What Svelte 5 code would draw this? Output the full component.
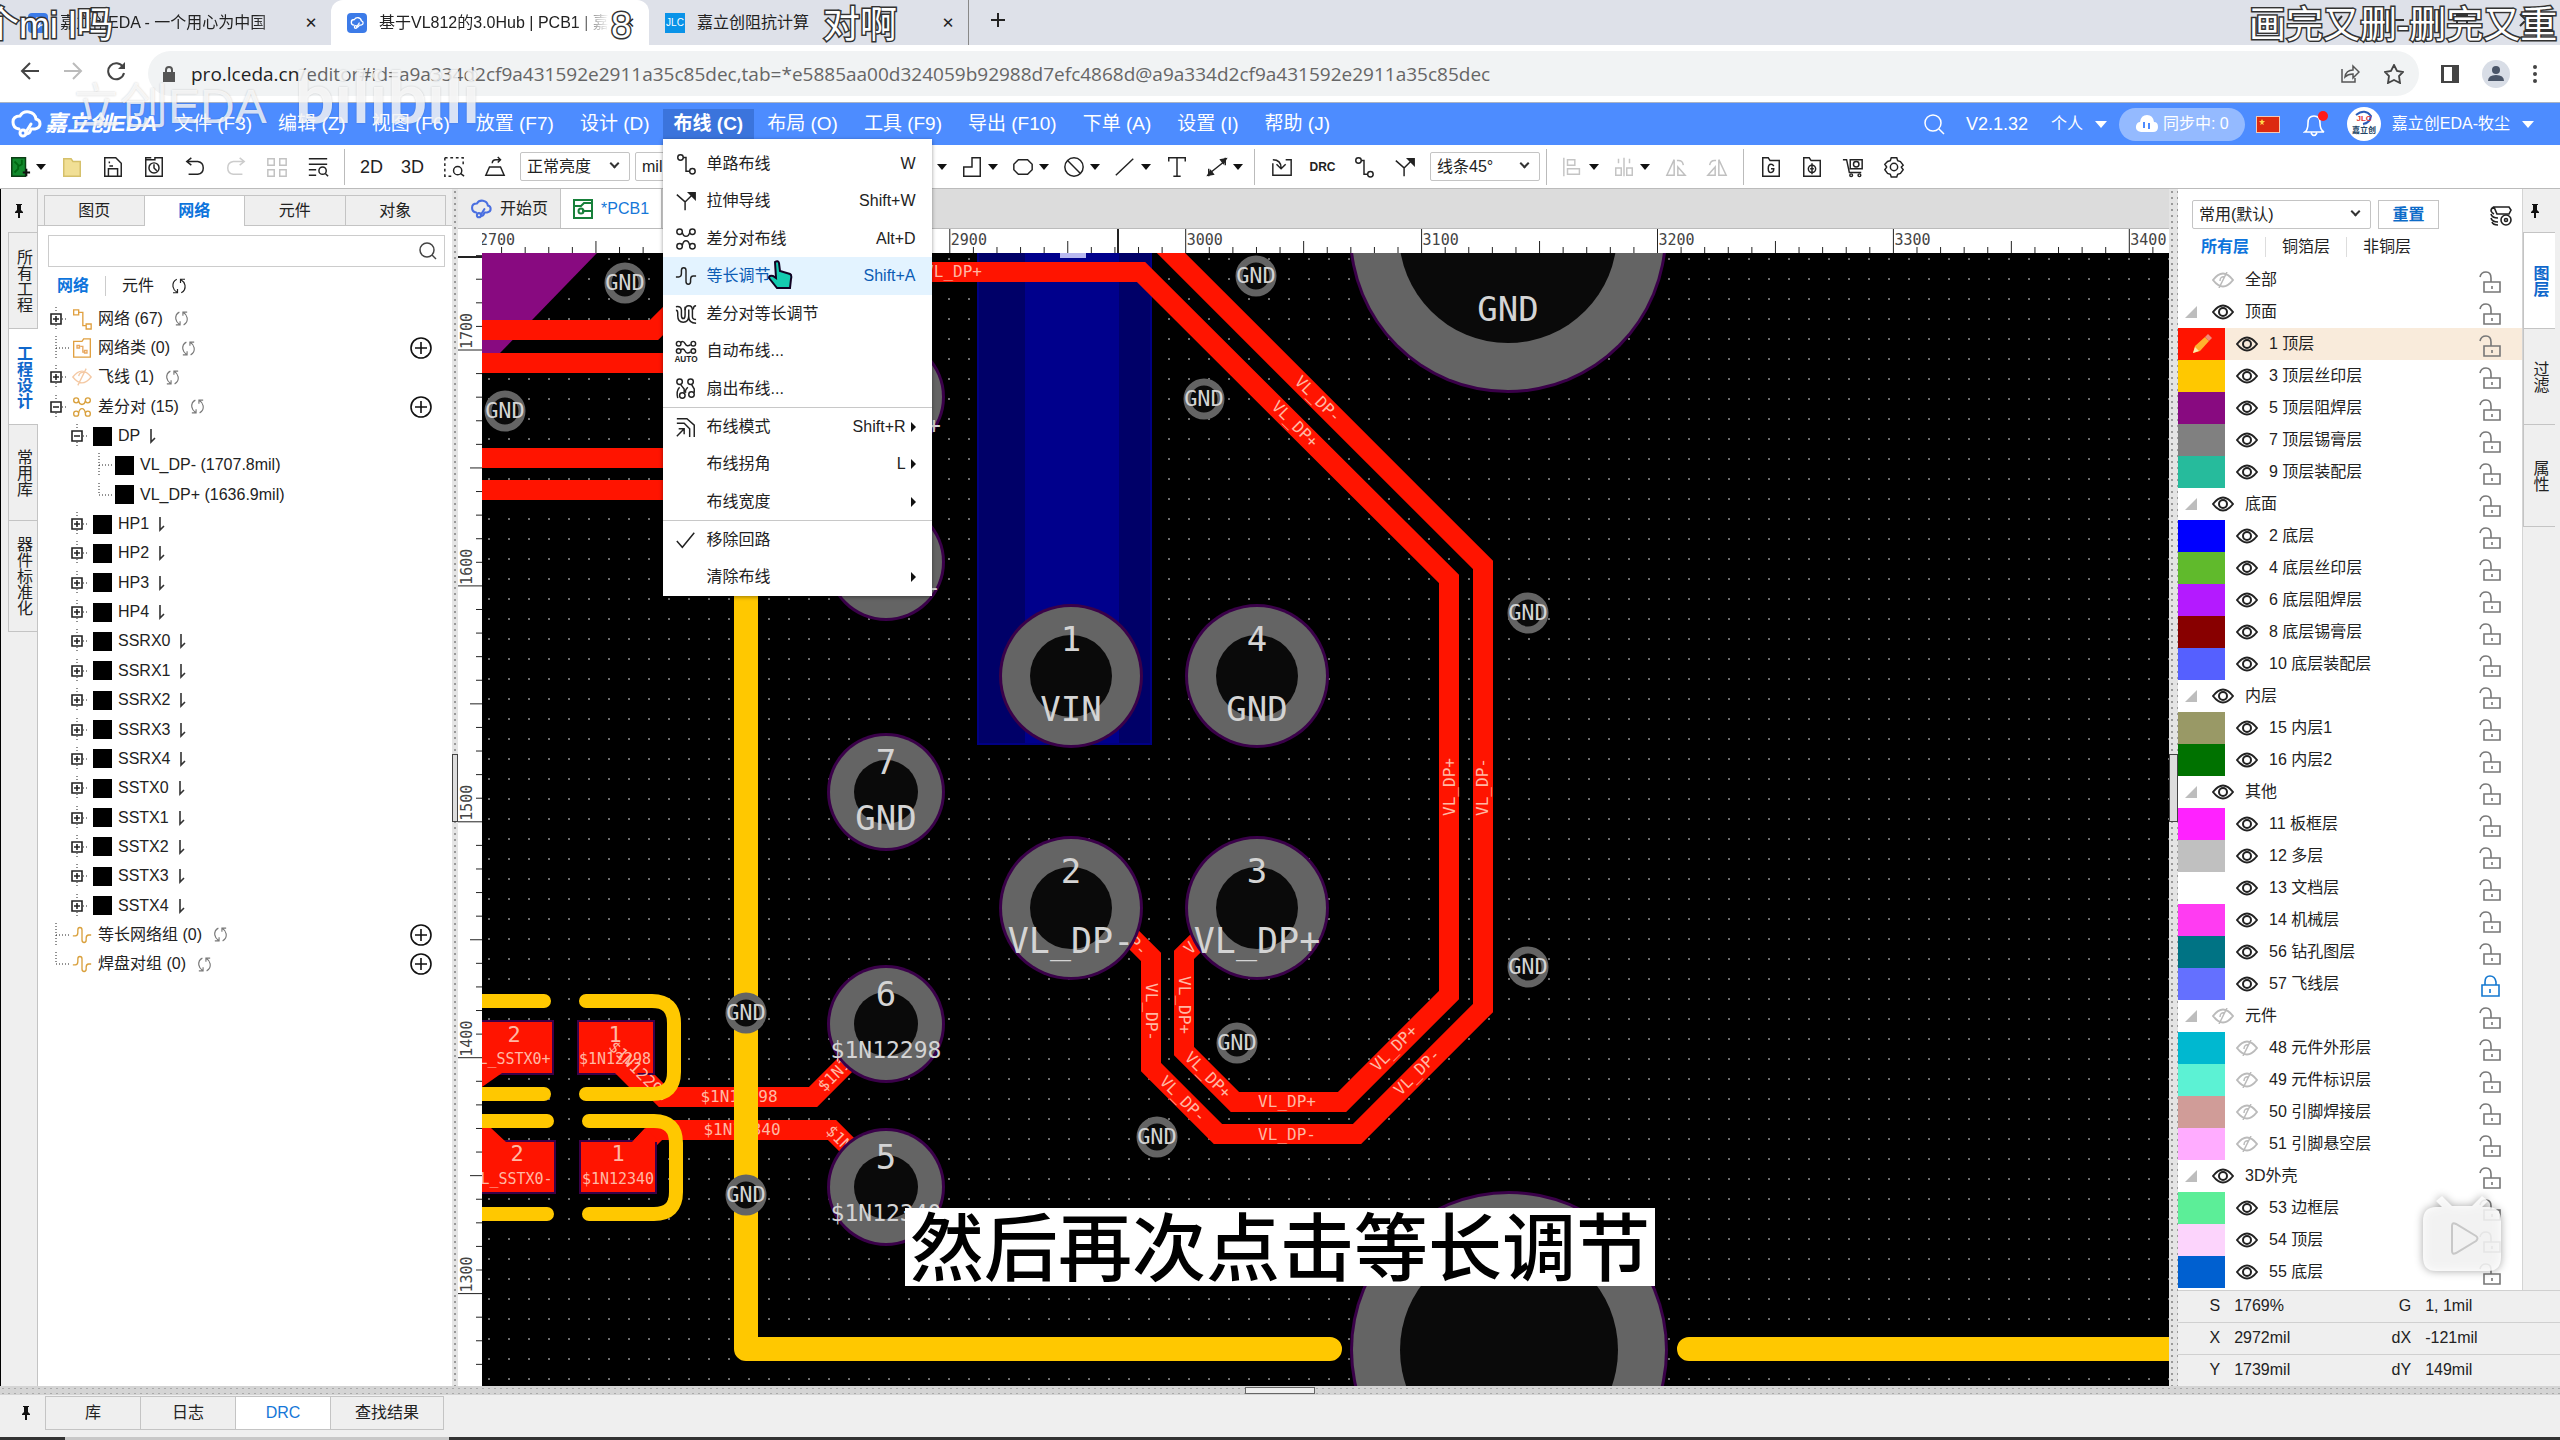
<script lang="ts">
  interface TreeNode {
    level: number;
    label: string;
    icon?: string;
    box?: '+' | '-';
    last?: boolean;
    add?: boolean;
    refresh?: boolean;
    sort?: boolean;
  }

  interface Layer {
    name: string;
    color?: string;
    hidden?: boolean;
    locked?: boolean;
    all?: boolean;
  }

  interface MenuItem {
    label: string;
    icon?: string;
    keys?: string;
    sub?: boolean;
    active?: boolean;
  }

  const icons: Record<string, string> = {
    pcb: '<path d="M3 2h15v20H3z" fill="#128a2d" stroke="#0b3d14"/><path d="M6 6l4 4v4l-4 4M14 4v5l-3 2" stroke="#061" stroke-width="2"/><path d="M15 18h8M19 14v8" stroke="#111" stroke-width="2"/>',
    folder: '<path d="M3 3h8l2 3h8v16H3z" fill="#f1df95" stroke="#d5c06a"/>',
    save: '<path d="M3 2h12l6 6v14H3zM7 22v-8h10v8M8 6v2M8 11h4"/>',
    saveAs: '<path d="M3 4h10V2h8v20H3V2h6"/><circle cx="12" cy="13" r="5.5"/><path d="M12 9v4l3 3"/>',
    undo: '<path d="M8 2L3 6l5 4M3 6h12q6 1 6 7t-6 7H5"/>',
    redo: '<path d="M16 2l5 4-5 4M21 6H9q-6 1-6 7t6 7h10" stroke="#ccc"/>',
    grid: '<path d="M2 3h7v7H2zM15 3h7v7h-7zM2 15h7v7H2zM15 15h7v7h-7z" stroke="#c2c2c2"/>',
    find: '<path d="M2 3h20M2 9h20M2 15h8M2 21h8"/><circle cx="17" cy="16" r="4"/><path d="M20 19l3 3"/>',
    zoomBox: '<path d="M2 2h20v7M2 2v20h8" stroke-dasharray="3 3"/><circle cx="16" cy="16" r="4.5"/><path d="M19 19l4 3"/>',
    trapezoid: '<path d="M6 12h12l4 9H2zM9 8q0-4 4-4h4M15 1l3 3-3 3"/>',
    route: '<circle cx="6" cy="5" r="3"/><circle cx="19" cy="20" r="3"/><path d="M9 5h3v15h4"/>',
    stretch: '<path d="M2 5l9 8v9M11 13l9-9"/><path d="M15 3h7v7z" fill="#222"/>',
    pair: '<circle cx="5" cy="4" r="3"/><circle cx="19" cy="4" r="3"/><circle cx="5" cy="20" r="3"/><circle cx="19" cy="20" r="3"/><path d="M8 5q1 4 4 4t4-4M8 19q1-5 4-5t4 5"/>',
    wave: '<path d="M1 13h3q3 0 3-4V6q0-3 2.500-3T12 6v12q0 3 2.500 3t2.500-3v-2q0-4 3-4h3"/>',
    pairWave: '<path d="M1 4q6-1 6 4v5q0 4 2 4t2-4V8q0-5 4-5t4 5v7q0 3 4 3"/><path d="M1 8q2 0 2 3v3q0 7 6 7t6-7V9q0-2 0-2v8q0 7 8 7M11 8V4M23 3q-3 0-3 4"/>',
    auto: '<circle cx="4" cy="4" r="2.500"/><circle cx="20" cy="4" r="2.500"/><circle cx="4" cy="12" r="2.500"/><circle cx="20" cy="12" r="2.500"/><path d="M6 3q3-3 5 1t6 1M6 11q3-3 5 1t6 1"/><text x="12" y="24" font-size="9" font-weight="700" text-anchor="middle" fill="#222" stroke="none" font-family="Liberation Sans, sans-serif">AUTO</text>',
    fan: '<circle cx="5" cy="4" r="3"/><circle cx="17" cy="4" r="3"/><path d="M6 7l4 5v4M18 7l3 5v4M5 10q-4 4-2 12M14 10q-4 4-2 6"/><circle cx="8" cy="19" r="3"/><circle cx="18" cy="18" r="3"/>',
    mode: '<path d="M2 3h11l8 7v13M2 8h8l6 6v9M2 22l8-8M4 14h6v6"/>',
    check: '<path d="M2 13l6 7L21 4"/>',
    polygon: '<path d="M3 12h9V2h9v20H3z"/>',
    roundRect: '<path d="M7 4h10l5 5v6l-5 5H7l-5-5V9z"/>',
    ban: '<circle cx="12" cy="12" r="10"/><path d="M5 5l14 14"/>',
    line: '<path d="M2 21L21 3"/>',
    text: '<path d="M3 6V2h18v4M12 2v20M8 22h8"/>',
    dimension: '<path d="M5 18L20 6M3 14v8M21 2v8" /><path d="M2 21l6-1-3-4zM22 3l-6 1 3 4z" fill="#222"/>',
    via: '<circle cx="12" cy="12" r="9" stroke-dasharray="3 2"/><circle cx="12" cy="12" r="4"/>',
    importIn: '<path d="M2 8V21H22V4h-6M2 4q9 0 9 9M6 9l5 5 5-5"/>',
    align: '<path d="M2 2v20M6 4h8v6H6zM6 14h13v6H6z" stroke="#c4c4c4"/>',
    spread: '<path d="M3 13h6v8H3zM15 13h6v8h-6zM6 8V3M12 2v20M18 8V3" stroke="#c4c4c4"/>',
    flipH: '<path d="M10 4v17H2zM14 21h8l-8-9zM13 5q6-1 7 5" stroke="#c0c0c0"/>',
    flipV: '<path d="M14 4v17h8zM10 21H2l8-9zM11 5q-6-1-7 5" stroke="#c0c0c0"/>',
    gerber: '<path d="M3 2h6l2 3h10v17H3z"/><path d="M15 11q-1-2-3-2-3 0-3 4.500t3 4.500q3 0 3-4h-3"/>',
    pickPlace: '<path d="M3 2h6l2 3h10v17H3z"/><circle cx="12" cy="14" r="4"/><path d="M12 8v12M10 14h4"/>',
    cart: '<path d="M1 4h4l3 14h13M9 4h13v10H9z"/><circle cx="15.500" cy="9" r="3"/><circle cx="10" cy="21" r="1.500"/><circle cx="19" cy="21" r="1.500"/>',
    gear: '<path d="M9 2h6l1 3 3 1 3 4-2 2 2 3-3 4-3 1-1 3H9l-1-3-3-1-3-4 2-3-2-3 3-3 3-1z"/><circle cx="12" cy="12" r="4"/>',
    netTree: '<path d="M2 1h6v6H2zM17 18h6v6h-6zM8 4h5v16h4" stroke="#e0a040"/>',
    netClass: '<path d="M2 4h10l2-3h8v22H2z" stroke="#e0a040"/><path d="M6 9h3v3H6zM15 15h3v3h-3zM10 10h3v7h2" stroke="#e8a860"/>',
    ratline: '<path d="M1 12q11-14 22 0-11 14-22 0zM17 2L7 22M15 7q-6-2-7 4" stroke="#f4c9a4"/>',
    pairTree: '<circle cx="5" cy="4" r="3"/><circle cx="19" cy="4" r="3"/><circle cx="5" cy="20" r="3"/><circle cx="19" cy="20" r="3"/><path d="M8 5q1 4 4 4t4-4M8 19q1-5 4-5t4 5" />',
    refresh: '<path d="M9 3Q3 6 4 13q1 5 5 7M4 21h6v-5M15 21q6-3 5-10-1-5-5-7M20 3h-6v5"/>',
    layersCog: '<path d="M5 4h15l2 3-2 4H8zM5 4q-3 1-3 4 1 2 3 3M2 11q1 4 7 4M2 15q1 4 7 4M3 19q1 3 6 3"/><circle cx="17" cy="17" r="5"/><circle cx="17" cy="17" r="1.500"/>'
  };

  const fileMenus = ['文件 (F3)', '编辑 (Z)', '视图 (F6)', '放置 (F7)', '设计 (D)', '布线 (C)', '布局 (O)', '工具 (F9)', '导出 (F10)', '下单 (A)', '设置 (I)', '帮助 (J)'];

  const routeMenu: MenuItem[][] = [
    [
      { label: '单路布线', icon: 'route', keys: 'W' },
      { label: '拉伸导线', icon: 'stretch', keys: 'Shift+W' },
      { label: '差分对布线', icon: 'pair', keys: 'Alt+D' },
      { label: '等长调节', icon: 'wave', keys: 'Shift+A', active: true },
      { label: '差分对等长调节', icon: 'pairWave' },
      { label: '自动布线...', icon: 'auto' },
      { label: '扇出布线...', icon: 'fan' }
    ],
    [
      { label: '布线模式', icon: 'mode', keys: 'Shift+R', sub: true },
      { label: '布线拐角', keys: 'L', sub: true },
      { label: '布线宽度', sub: true }
    ],
    [
      { label: '移除回路', icon: 'check' },
      { label: '清除布线', sub: true }
    ]
  ];

  const pairs = ['HP1', 'HP2', 'HP3', 'HP4', 'SSRX0', 'SSRX1', 'SSRX2', 'SSRX3', 'SSRX4', 'SSTX0', 'SSTX1', 'SSTX2', 'SSTX3', 'SSTX4'];

  const tree: TreeNode[] = [
    { level: 1, label: '网络 (67)', icon: 'netTree', box: '+', refresh: true },
    { level: 1, label: '网络类 (0)', icon: 'netClass', refresh: true, add: true },
    { level: 1, label: '飞线 (1)', icon: 'ratline', box: '+', refresh: true },
    { level: 1, label: '差分对 (15)', icon: 'pairTree', box: '-', refresh: true, add: true },
    { level: 2, label: 'DP', box: '-', sort: true },
    { level: 3, label: 'VL_DP- (1707.8mil)' },
    { level: 3, label: 'VL_DP+ (1636.9mil)', last: true },
    ...pairs.map((label) => ({ level: 2, label, box: '+' as const, sort: true })),
    { level: 1, label: '等长网络组 (0)', icon: 'wave', refresh: true, add: true },
    { level: 1, label: '焊盘对组 (0)', icon: 'wave', refresh: true, add: true, last: true }
  ];

  const layers: Layer[] = [
    { name: '全部', hidden: true, all: true },
    { name: '顶面' },
    { name: '1 顶层', color: '#ff1400' },
    { name: '3 顶层丝印层', color: '#ffc800' },
    { name: '5 顶层阻焊层', color: '#880a80' },
    { name: '7 顶层锡膏层', color: '#808080' },
    { name: '9 顶层装配层', color: '#26bb9c' },
    { name: '底面' },
    { name: '2 底层', color: '#0000ff' },
    { name: '4 底层丝印层', color: '#60ba2c' },
    { name: '6 底层阻焊层', color: '#b41aff' },
    { name: '8 底层锡膏层', color: '#880000' },
    { name: '10 底层装配层', color: '#5560ff' },
    { name: '内层' },
    { name: '15 内层1', color: '#999966' },
    { name: '16 内层2', color: '#007200' },
    { name: '其他' },
    { name: '11 板框层', color: '#ff22ff' },
    { name: '12 多层', color: '#c0c0c0' },
    { name: '13 文档层', color: '#ffffff' },
    { name: '14 机械层', color: '#ff3cf2' },
    { name: '56 钻孔图层', color: '#007384' },
    { name: '57 飞线层', color: '#6470ff', locked: true },
    { name: '元件', hidden: true },
    { name: '48 元件外形层', color: '#00b8d0', hidden: true },
    { name: '49 元件标识层', color: '#5cf2d4', hidden: true },
    { name: '50 引脚焊接层', color: '#d09c98', hidden: true },
    { name: '51 引脚悬空层', color: '#ffacff', hidden: true },
    { name: '3D外壳' },
    { name: '53 边框层', color: '#5cee98' },
    { name: '54 顶层', color: '#fcd4fc' },
    { name: '55 底层', color: '#0060d0' }
  ];

  const vias = [[625, 283], [505, 411], [1256, 276], [1204, 399], [1528, 613], [1528, 967], [1237, 1043], [1157, 1137], [746, 1013], [746, 1195]];

  const pads = [
    { x: 1071, y: 676, r: 69, hole: 41, num: '1', net: 'VIN', size: 34 },
    { x: 1257, y: 676, r: 69, hole: 41, num: '4', net: 'GND', size: 34 },
    { x: 1071, y: 908, r: 69, hole: 41, num: '2', net: 'VL_DP-', size: 35 },
    { x: 1257, y: 908, r: 69, hole: 41, num: '3', net: 'VL_DP+', size: 35 },
    { x: 886, y: 397, r: 56, hole: 32, num: '', net: '', size: 34 },
    { x: 886, y: 562, r: 56, hole: 32, num: '', net: '', size: 34 },
    { x: 886, y: 792, r: 56, hole: 32, num: '7', net: 'GND', size: 34 },
    { x: 886, y: 1024, r: 56, hole: 32, num: '6', net: '$1N12298', size: 23 },
    { x: 886, y: 1187, r: 56, hole: 32, num: '5', net: '$1N12340', size: 23 }
  ];

  const traceLabels = [
    { x: 953, y: 271, a: 0, t: 'VL_DP+' },
    { x: 1295, y: 424, a: 45, t: 'VL_DP+' },
    { x: 1318, y: 399, a: 45, t: 'VL_DP-' },
    { x: 1449, y: 787, a: -90, t: 'VL_DP+' },
    { x: 1482, y: 787, a: -90, t: 'VL_DP-' },
    { x: 1394, y: 1048, a: -45, t: 'VL_DP+' },
    { x: 1417, y: 1072, a: -45, t: 'VL_DP-' },
    { x: 1287, y: 1101, a: 0, t: 'VL_DP+' },
    { x: 1287, y: 1134, a: 0, t: 'VL_DP-' },
    { x: 1208, y: 1075, a: 45, t: 'VL_DP+' },
    { x: 1183, y: 1099, a: 45, t: 'VL_DP-' },
    { x: 1151, y: 1012, a: 90, t: 'VL_DP-' },
    { x: 1184, y: 1005, a: 90, t: 'VL_DP+' },
    { x: 1138, y: 946, a: 45, t: 'P-' },
    { x: 1190, y: 948, a: -45, t: 'V' },
    { x: 739, y: 1096, a: 0, t: '$1N12298' },
    { x: 742, y: 1129, a: 0, t: '$1N12340' },
    { x: 639, y: 1071, a: 45, t: '$1N12298' },
    { x: 834, y: 1075, a: -45, t: '$1N1' },
    { x: 839, y: 1138, a: 45, t: '$1N' }
  ];

  // one ruler division is 10mil
  const step = 23.59;
  const origin = { x: 482, y: 253 };
  const xTicks = Array.from({ length: 73 }, (_, i) => ({ pos: 478 + i * step - origin.x, mil: 2700 + i * 10 }));
  const yTicks = Array.from({ length: 49 }, (_, i) => ({ pos: 350 + (i - 4) * step - origin.y, mil: 1740 - i * 10 }));

  function tick(mil: number) {
    if (mil % 100 === 0) return 24;
    return mil % 50 === 0 ? 12 : 6;
  }

  let search = $state('');
  let openMenu = $state('布线 (C)');
  let sideTab = $state('网络');
  let bottomTab = $state('DRC');
  let activeLayer = $state('1 顶层');
</script>

{#snippet icon(name: string, size = 22)}
  <svg class="icon" width={size} height={size} viewBox="0 0 24 24" fill="none" stroke="currentColor" stroke-width="1.600">{@html icons[name]}</svg>
{/snippet}

{#snippet tool(name: string)}
  <button class="tool" aria-label={name}>{@render icon(name)}</button>
{/snippet}

{#snippet combo(name: string)}
  <button class="combo" aria-label={name}>{@render icon(name)}<span class="caret"></span></button>
{/snippet}

{#snippet pin()}
  <svg class="pin" width="10" height="14" viewBox="0 0 10 14"><path d="M2 0h6v1H7v5l2 2v1H6v5H4V9H1V8l2-2V1H2z" fill="#111" /></svg>
{/snippet}

{#snippet cloud(size: number)}
  <svg width={size} height={size} viewBox="0 0 32 30" fill="none" stroke="currentColor" stroke-width="3" stroke-linecap="round">
    <path d="M9 20q-6-1-6-7t7-6q3-5 9-4t7 7q4 1 4 5t-5 5h-4q-1 5-5 5" /><circle cx="13" cy="24" r="3" /><path d="M16 23l5-8" />
  </svg>
{/snippet}

{#snippet eye(off: boolean | undefined)}
  <svg width="22" height="16" viewBox="0 0 22 16" fill="none" stroke={off ? '#bbb' : '#222'} stroke-width="2">
    <path d="M1 8q10-13 20 0-10 13-20 0z" />
    {#if off}
      <path d="M15 0L7 16M13 5q-5-1-5 4" stroke-width="1.500" />
    {:else}
      <circle cx="11" cy="8" r="4" />
    {/if}
  </svg>
{/snippet}

<div class="window">
  <header class="tabstrip">
    <div class="tab first">
      <span class="favicon">{@render cloud(14)}</span>
      <span class="tab-title fade">嘉立创EDA - 一个用心为中国</span>
      <button class="close" aria-label="close">✕</button>
    </div>
    <div class="tab current">
      <span class="favicon">{@render cloud(14)}</span>
      <span class="tab-title fade">基于VL812的3.0Hub | PCB1 | 嘉</span>
      <button class="close" aria-label="close">✕</button>
    </div>
    <div class="tab third">
      <span class="favicon jlc">JLC</span>
      <span class="tab-title">嘉立创阻抗计算</span>
      <button class="close" aria-label="close">✕</button>
    </div>
    <button class="new-tab" aria-label="new tab"><svg width="16" height="16" viewBox="0 0 16 16"><path d="M8 1v14M1 8h14" stroke="#222" stroke-width="2" /></svg></button>
    <div class="window-buttons">
      <svg width="210" height="16" viewBox="0 0 210 16" fill="none" stroke="#333" stroke-width="2"><path d="M4 4l6 7 6-7M66 8h12M131 3h10v10h-10zM194 2l12 12M206 2l-12 12" /></svg>
    </div>
  </header>

  <div class="addressbar">
    <button aria-label="back"><svg width="22" height="20" viewBox="0 0 22 20" fill="none" stroke="#444" stroke-width="2"><path d="M20 10H3M11 2l-8 8 8 8" /></svg></button>
    <button aria-label="forward"><svg width="22" height="20" viewBox="0 0 22 20" fill="none" stroke="#bbb" stroke-width="2"><path d="M2 10h17M11 2l8 8-8 8" /></svg></button>
    <button aria-label="reload"><svg width="22" height="20" viewBox="0 0 22 20" fill="none" stroke="#444" stroke-width="2"><path d="M18 6a8 8 0 1 0 1 6" /><path d="M20 1v7h-7z" fill="#444" stroke="none" /></svg></button>
    <div class="url">
      <svg width="12" height="16" viewBox="0 0 12 16"><path d="M0 6h12v10H0z" fill="#555" /><path d="M3 6V4q0-3 3-3t3 3v2" fill="none" stroke="#555" stroke-width="2" /></svg>
      <a href="#editor"><b>pro.lceda.cn</b>/editor#id=a9a334d2cf9a431592e2911a35c85dec,tab=*e5885aa00d324059b92988d7efc4868d@a9a334d2cf9a431592e2911a35c85dec</a>
      <span class="grow"></span>
      <svg width="20" height="20" viewBox="0 0 20 20" fill="none" stroke="#555" stroke-width="1.500"><path d="M2 5v13h13v-4M5 13q1-7 8-7V2l6 6-6 6v-4q-5 0-8 3z" /></svg>
      <svg width="20" height="20" viewBox="0 0 20 20" fill="none" stroke="#444" stroke-width="1.800"><path d="M10 1l3 6 6 1-4 4 1 7-6-3-6 3 1-7-4-4 6-1z" /></svg>
    </div>
    <svg width="20" height="20" viewBox="0 0 20 20"><path d="M1 1h18v18H1z" fill="#444" /><path d="M4 3h8v14H4z" fill="#fff" /></svg>
    <svg width="30" height="30" viewBox="0 0 30 30"><circle cx="15" cy="15" r="14" fill="#d8dde6" /><circle cx="15" cy="11" r="4" fill="#4a5568" /><path d="M7 22q0-6 8-6t8 6z" fill="#4a5568" /></svg>
    <svg width="6" height="20" viewBox="0 0 6 20" fill="#444"><circle cx="3" cy="3" r="2" /><circle cx="3" cy="10" r="2" /><circle cx="3" cy="17" r="2" /></svg>
  </div>

  <nav class="menubar">
    <span class="brand">{@render cloud(32)}<i>嘉立创EDA</i></span>
    {#each fileMenus as name}
      <div class="menu-slot">
        <button class="menu" class:open={openMenu === name} onclick={() => (openMenu = openMenu === name ? '' : name)}>{name}</button>
        {#if name === '布线 (C)' && openMenu === name}
          <div class="dropdown">
            {#each routeMenu as group}
              <div class="group">
                {#each group as item}
                  <button class="item" class:active={item.active}>
                    <span class="item-icon">{#if item.icon}{@render icon(item.icon, 22)}{/if}</span>
                    <span>{item.label}</span>
                    <span class="keys">{item.keys ?? ''}</span>
                    {#if item.sub}<span class="arrow"></span>{/if}
                  </button>
                {/each}
              </div>
            {/each}
            <svg class="pointer" width="26" height="30" viewBox="0 0 26 30"><path d="M8 2q3-2 4 1l1 8 10 3q2 1 1 5l-1 9H10L2 18q0-3 4-2l3 2z" fill="#14cbb0" stroke="#102" stroke-width="2" /></svg>
          </div>
        {/if}
      </div>
    {/each}
    <span class="grow"></span>
    <div class="account">
      <svg width="22" height="22" viewBox="0 0 22 22" fill="none" stroke="#fff" stroke-width="1.500"><circle cx="10" cy="10" r="8" /><path d="M16 16l5 5" /></svg>
      <span class="version">V2.1.32</span>
      <button class="personal">个人<span class="caret light"></span></button>
      <button class="sync"><svg width="24" height="20" viewBox="0 0 24 20"><path d="M6 18q-6-1-5-6 1-4 4-4 1-7 7-7t7 7q4 0 4 5t-5 5z" fill="#fff" /><path d="M9 8v6M14 9v6" stroke="#4d8cff" stroke-width="2" /></svg>同步中: 0</button>
      <svg class="flag" width="24" height="17" viewBox="0 0 24 17"><path d="M0 0h24v17H0z" fill="#f3c9b5" /><path d="M1 1h22v15H1z" fill="#dc2a10" /><path d="M6 3l1 2h2L7 7l1 2-2-1-2 1 1-2-2-2h2z" fill="#ffd84a" /></svg>
      <svg class="bell" width="28" height="28" viewBox="0 0 28 28" fill="none" stroke="#fff" stroke-width="1.600"><path d="M2 22q3-2 3-9 0-7 6-7t6 7q0 7 4 9zM8 23q3 5 6 0" /><circle cx="20" cy="6" r="5" fill="#ff1a1a" stroke="none" /></svg>
      <svg class="avatar" width="34" height="34" viewBox="0 0 34 34"><circle cx="17" cy="17" r="17" fill="#fff" /><path d="M9 8q9-7 15 1-1 7-8 8" fill="none" stroke="#2a5cb8" stroke-width="2" /><text x="17" y="14" font-size="8" font-weight="700" text-anchor="middle" fill="#d33">JLC</text><text x="17" y="26" font-size="8" font-weight="700" text-anchor="middle" fill="#246">嘉立创</text></svg>
      <button class="user">嘉立创EDA-牧尘<span class="caret light"></span></button>
    </div>
  </nav>

  <div class="toolbar">
    {@render combo('pcb')}
    {#each ['folder', 'save', 'saveAs', 'undo', 'redo', 'grid', 'find'] as name}{@render tool(name)}{/each}
    <span class="sep"></span>
    <button class="tool">2D</button>
    <button class="tool">3D</button>
    {@render tool('zoomBox')}
    {@render tool('trapezoid')}
    <label class="select"><select aria-label="亮度"><option>正常亮度</option></select></label>
    <label class="select"><select aria-label="单位"><option>mil</option></select></label>
    <span class="sep"></span>
    {@render tool('route')}
    {#each ['line', 'text', 'via', 'polygon', 'roundRect', 'ban', 'line'] as name}{@render combo(name)}{/each}
    {@render tool('text')}
    {@render combo('dimension')}
    <span class="sep"></span>
    {@render tool('importIn')}
    <button class="tool drc">DRC</button>
    {@render tool('route')}
    {@render tool('stretch')}
    <label class="select"><select aria-label="拐角"><option>线条45°</option></select></label>
    <span class="sep"></span>
    {@render combo('align')}
    {@render combo('spread')}
    {@render tool('flipH')}
    {@render tool('flipV')}
    <span class="sep"></span>
    {#each ['gerber', 'pickPlace', 'cart', 'gear'] as name}{@render tool(name)}{/each}
  </div>

  <main>
    <aside class="rail">
      <div class="rail-pin">{@render pin()}</div>
      {#each ['所有工程', '工程设计', '常用库', '器件标准化'] as name}
        <button class="rail-tab" class:on={name === '工程设计'}>{name}</button>
      {/each}
    </aside>

    <section class="project">
      <div class="project-tabs">
        {#each ['图页', '网络', '元件', '对象'] as name}
          <button class:on={sideTab === name} onclick={() => (sideTab = name)}>{name}</button>
        {/each}
      </div>
      <label class="search">
        <input type="text" aria-label="搜索" bind:value={search} />
        <svg width="18" height="18" viewBox="0 0 18 18" fill="none" stroke="#444" stroke-width="1.500"><circle cx="8" cy="8" r="7" /><path d="M13 13l4 4" /></svg>
      </label>
      <div class="subtabs">
        <button class="on">网络</button>
        <button>元件</button>
        {@render icon('refresh', 18)}
      </div>
      <ul class="tree">
        {#each tree as node}
          <li class="level-{node.level}">
            <svg class="joint" width="20" height="24" viewBox="0 0 20 24" fill="none" stroke="#222">
              {#if node.box}
                <path d="M7 0v6M7 18v6M13 12h6" stroke-dasharray="1 2" />
                <path d="M2 7h10v10H2zM4 12h6" stroke-width="1.600" />
                {#if node.box === '+'}<path d="M7 9v6" stroke-width="1.600" />{/if}
              {:else}
                <path d={node.last ? 'M7 0v12h13' : 'M7 0v24M7 12h13'} stroke-dasharray="1 2" />
              {/if}
            </svg>
            {#if node.icon}
              <span class="tree-icon" class:gold={node.icon === 'wave' || node.icon === 'pairTree'}>{@render icon(node.icon, 20)}</span>
            {:else}
              <span class="net-color"></span>
            {/if}
            <span>{node.label}</span>
            {#if node.refresh}<span class="reload">{@render icon('refresh', 17)}</span>{/if}
            {#if node.sort}<svg class="sort" width="8" height="16" viewBox="0 0 8 16" fill="none" stroke="#333" stroke-width="1.600"><path d="M2 1v13l4-4" /></svg>{/if}
            {#if node.add}
              <button class="add" aria-label="add {node.label}"><svg width="22" height="22" viewBox="0 0 22 22" fill="none" stroke="#111" stroke-width="1.600"><circle cx="11" cy="11" r="10" /><path d="M11 5v12M5 11h12" /></svg></button>
            {/if}
          </li>
        {/each}
      </ul>
    </section>

    <div class="splitter"><span class="handle"></span></div>

    <section class="editor">
      <div class="doc-tabs">
        <button class="doc">{@render cloud(22)}开始页</button>
        <button class="doc on">
          <svg width="20" height="20" viewBox="0 0 20 20" fill="none" stroke="#17803a" stroke-width="2"><path d="M1 1h18v18H1zM1 7h7l3-3h8M9 12h10" /><circle cx="8" cy="12" r="2.500" /></svg>*PCB1
        </button>
      </div>
      <div class="sheet">
        <div class="corner"></div>
        <svg class="ruler" width="100%" height="24">
          {#each xTicks as t}
            <path d="M{t.pos} 24v-{tick(t.mil)}" />
            {#if t.mil % 100 === 0}<text x={t.pos + 1} y="16">{t.mil}</text>{/if}
          {/each}
          <path d="M636 0v24" stroke-width="2" />
        </svg>
        <svg class="ruler" width="24" height="100%">
          {#each yTicks as t}
            <path d="M24 {t.pos}h-{tick(t.mil)}" />
            {#if t.mil % 100 === 0}<text transform="translate(14 {t.pos - 1}) rotate(-90)">{t.mil}</text>{/if}
          {/each}
          <path d="M0 4h24" stroke-width="2" />
        </svg>
        <svg class="board" width="100%" height="100%">
          <defs>
            <pattern id="dots" width="20" height="20" x="488" y="258" patternUnits="userSpaceOnUse"><path d="M0 0h2v2H0z" fill="#6e6e6e" /></pattern>
          </defs>
          <g transform="translate(-482 -253)">
            <rect x="482" y="253" width="4000" height="3000" fill="url(#dots)" />
            <path d="M482 253H597L499 354H482z" fill="#880a80" />
            <rect x="977" y="253" width="175" height="492" fill="#000068" />
            <rect x="1025" y="253" width="94" height="492" fill="#00008c" />
            <path d="M977 744h174v-40M978 744V253M1151 705V253" fill="none" stroke="#000084" stroke-width="2" />
            <rect x="1060" y="253" width="26" height="5" fill="#b8b8f0" />
            <g class="trace">
              <path d="M470 330H654L690 294M470 363H700M470 458H700M470 490H700" />
              <path d="M700 272H1141L1449 579V995L1342 1102H1235L1184 1051V955L1231 908" />
              <path d="M1151 233L1483 565V1008L1357 1134H1218L1151 1067V957L1102 908" />
              <path d="M615 1049L663 1097H813L886 1024" />
              <path d="M625 1163L658 1130H832L886 1184" />
            </g>
            <g class="smd">
              <path d="M470 1022h82v51h-82zM579 1022h74v51h-74zM470 1142h84v50h-84zM581 1142h74v50h-74z" />
            </g>
            <path d="M482 1073H502L482 1087zM482 1128H491L506 1142H482zM615 1073H637L650 1086 640 1098zM632 1142L645 1128 660 1142z" fill="#ff1400" />
            <g class="net small">
              {#each traceLabels as l}
                <text transform="translate({l.x} {l.y}) rotate({l.a})">{l.t}</text>
              {/each}
            </g>
            <g class="net part">
              <text x="514" y="1034" class="big">2</text><text x="615" y="1034" class="big">1</text>
              <text x="517" y="1153" class="big">2</text><text x="618" y="1153" class="big">1</text>
              <text x="510" y="1059">VL_SSTX0+</text><text x="615" y="1059">$1N12298</text>
              <text x="512" y="1179">VL_SSTX0-</text><text x="618" y="1179">$1N12340</text>
            </g>
            <g class="silk">
              <path d="M470 1001H544M470 1094H544M586 1001H652Q674 1001 674 1023V1072Q674 1094 652 1094H586" />
              <path d="M470 1121H547M470 1214H547M589 1121H654Q676 1121 676 1143V1192Q676 1214 654 1214H589" />
            </g>
            <path d="M746 500V1349H1330M1689 1349H4000" fill="none" stroke="#ffc800" stroke-width="24" stroke-linecap="round" stroke-linejoin="round" />
            {#each [[1508, 234], [1509, 1350]] as [x, y]}
              <circle cx={x} cy={y} r="159" fill="#3a0049" />
              <circle cx={x} cy={y} r="156" fill="#646464" />
              <circle cx={x} cy={y} r="109" fill="#0a0a0a" />
              <text class="net white" {x} y={y + 75} font-size="34">GND</text>
            {/each}
            {#each pads as p}
              <circle cx={p.x} cy={p.y} r={p.r + 3} fill="#3a0049" />
              <circle cx={p.x} cy={p.y} r={p.r} fill="#646464" />
              <circle cx={p.x} cy={p.y} r={p.hole} fill="#0a0a0a" />
            {/each}
            {#each pads as p}
              <text class="net white" x={p.x} y={p.y - (p.r > 60 ? 37 : 30)} font-size="34">{p.num}</text>
              <text class="net white" x={p.x} y={p.y + (p.r > 60 ? 33 : 26)} font-size={p.size}>{p.net}</text>
            {/each}
            <text class="net white" x="934" y="425" font-size="23">+</text>
            <text class="net white" x="934" y="587" font-size="23">-</text>
            {#each vias as [x, y]}
              <circle cx={x} cy={y} r="17" fill="#0a0a0a" stroke="#646464" stroke-width="7" />
              <text class="net white" {x} y={y - 1} font-size="22">GND</text>
            {/each}
          </g>
        </svg>
      </div>
    </section>

    <div class="splitter right"><span class="handle"></span></div>

    <section class="layers">
      <div class="layer-head">
        <label class="select wide"><select aria-label="图层配置"><option>常用(默认)</option></select></label>
        <button class="reset">重置</button>
        <span class="grow"></span>
        {@render icon('layersCog', 24)}
      </div>
      <div class="layer-tabs">
        <button class="on">所有层</button>
        <button>铜箔层</button>
        <button>非铜层</button>
      </div>
      <ul class="layer-list">
        {#each layers as layer}
          <li class:group-row={!layer.color} class:selected={layer.name === activeLayer}>
            {#if layer.color}
              <button class="swatch" style="background: {layer.color}" aria-label={layer.name} onclick={() => (activeLayer = layer.name)}>
                {#if layer.name === activeLayer}
                  <svg width="22" height="22" viewBox="0 0 22 22"><path d="M2 20l2-7L14 4l4 4-9 10z" fill="#ffb22e" /><path d="M14 4l3-3 4 4-3 3z" fill="#f08a7a" /><path d="M2 20l2-6 4 4z" fill="#ffe9b0" /></svg>
                {/if}
              </button>
            {:else}
              <svg class="fold" width="12" height="12" viewBox="0 0 12 12">{#if !layer.all}<path d="M12 0v12H0z" fill="#bdbdbd" />{/if}</svg>
            {/if}
            <button class="eye" aria-label="toggle {layer.name}">{@render eye(layer.hidden)}</button>
            <span>{layer.name}</span>
            <button class="lock" aria-label="lock {layer.name}">
              <svg width="22" height="22" viewBox="0 0 22 22" fill="none" stroke={layer.locked ? '#1478d0' : '#777'} stroke-width="1.600">
                {#if layer.locked}
                  <path d="M3 10h17v11H3zM6 10V7q0-6 5-6t6 6v3M11 14v4" />
                {:else}
                  <path d="M5 11h16v10H5zM12 11V7q0-6-5-6T1 6M13 15v3" />
                {/if}
              </svg>
            </button>
          </li>
        {/each}
      </ul>
      <span class="grow"></span>
      <table class="status">
        <tbody>
          <tr><th>S</th><td>1769%</td><th>G</th><td>1, 1mil</td></tr>
          <tr><th>X</th><td>2972mil</td><th>dX</th><td>-121mil</td></tr>
          <tr><th>Y</th><td>1739mil</td><th>dY</th><td>149mil</td></tr>
        </tbody>
      </table>
      <svg class="tv" width="84" height="80" viewBox="0 0 84 80">
        <path d="M22 2l10 10h20L62 2l6 5-6 6h6q13 0 13 14v36q0 14-13 14H16Q3 77 3 63V27q0-14 13-14h6l-6-6z" fill="#fff" fill-opacity=".85" />
        <path d="M32 32q0-4 4-2l20 12q3 2 0 5L36 59q-4 2-4-2z" fill="none" stroke="#c8c8c8" stroke-width="2" />
      </svg>
    </section>

    <aside class="rail right">
      <div class="rail-pin">{@render pin()}</div>
      {#each ['图层', '过滤', '属性'] as name}
        <button class="rail-tab" class:on={name === '图层'}>{name}</button>
      {/each}
    </aside>
  </main>

  <div class="h-splitter"><span></span></div>
  <footer>
    <div class="foot-pin">{@render pin()}</div>
    {#each ['库', '日志', 'DRC', '查找结果'] as name}
      <button class:on={bottomTab === name} onclick={() => (bottomTab = name)}>{name}</button>
    {/each}
  </footer>
  <div class="taskbar"><span></span></div>

  <div class="watermark"><span>立创EDA</span><b>bilibili</b></div>
  <div class="danmaku a">个mi l吗</div>
  <div class="danmaku b">8</div>
  <div class="danmaku c">对啊</div>
  <div class="danmaku d">画完又删-删完又重</div>
  <div class="subtitle">然后再次点击等长调节</div>
</div>

<style>
:global(body) {
  background: #efefef;
}

.window {
  position: relative;
  display: flex;
  flex-direction: column;
  height: 100vh;
  overflow: hidden;
  font-family: "Liberation Sans", "Noto Sans CJK SC", sans-serif;
  font-size: 16px;
  line-height: 20px;
  color: #222;
}

button {
  font: inherit;
  color: inherit;
  background: none;
  border: none;
  padding: 0;
  cursor: pointer;
}

ul {
  list-style: none;
  margin: 0;
  padding: 0;
}

svg {
  flex: none;
}

.icon {
  display: block;
  overflow: visible;
}

.grow {
  flex: 1;
}

.tabstrip {
  display: flex;
  height: 45px;
  background: #dee1e9;
}

.tab {
  display: flex;
  align-items: center;
  gap: 12px;
  padding: 0 12px 0 16px;
  box-sizing: border-box;
}

.tab.first {
  width: 331px;
  padding-left: 28px;
}

.tab.current {
  width: 318px;
  background: #fff;
  border-radius: 12px 12px 0 0;
}

.tab.third {
  width: 320px;
  border-right: 1px solid #888;
}

.favicon {
  display: flex;
  align-items: center;
  justify-content: center;
  width: 20px;
  height: 20px;
  flex: none;
  border-radius: 4px;
  background: #3c7be8;
  color: #fff;
}

.favicon.jlc {
  border-radius: 0;
  background: #0a93e8;
  font-size: 10px;
}

.tab-title {
  flex: 1;
  white-space: nowrap;
  overflow: hidden;
}

.tab-title.fade {
  mask-image: linear-gradient(90deg, #000 85%, transparent);
}

.close {
  font-family: "DejaVu Sans", sans-serif;
  font-size: 15px;
  width: 16px;
}

.new-tab {
  width: 58px;
}

.window-buttons {
  margin-left: auto;
  padding: 12px 24px 0 0;
}

.addressbar {
  display: flex;
  align-items: center;
  gap: 21px;
  height: 57px;
  padding: 0 22px 0 19px;
  background: #fff;
  border-bottom: 1px solid #a9b3c4;
}

.addressbar .url {
  display: flex;
  align-items: center;
  flex: 1;
  gap: 16px;
  height: 45px;
  padding: 0 15px;
  border-radius: 23px;
  background: #f1f3f4;
}

.url a {
  font: 19px "Open Sans", "Noto Sans", sans-serif;
  color: #666;
  text-decoration: none;
}

.url b {
  font-weight: 400;
  color: #222;
}

.url svg + svg {
  margin-left: 8px;
}

.menubar {
  display: flex;
  align-items: center;
  height: 42px;
  background: #4d8cff;
  color: #fff;
}

.brand {
  display: flex;
  align-items: center;
  gap: 3px;
  width: 151px;
  padding-left: 10px;
  font-size: 22px;
  font-weight: 700;
  white-space: nowrap;
}

.menu-slot {
  position: relative;
}

.menu {
  height: 30px;
  padding: 0 13px;
  font-size: 19px;
  white-space: nowrap;
}

.menu.open {
  background: #3b74dc;
  font-weight: 700;
  padding: 0 11px;
}

.dropdown {
  position: absolute;
  top: 30px;
  left: 0;
  z-index: 5;
  width: 269px;
  background: #fff;
  color: #222;
  box-shadow: 0 1px 4px #0006;
}

.group:first-child {
  padding-top: 6px;
}

.group + .group {
  border-top: 1px solid #c8c8c8;
}

.item {
  display: flex;
  align-items: center;
  width: 100%;
  height: 37px;
  padding: 0 16px 0 12px;
  text-align: left;
}

.item:nth-child(even) {
  height: 38px;
}

.item.active {
  background: #e3f3ff;
  color: #0d5cb4;
}

.item-icon {
  width: 32px;
  color: #222;
}

.keys {
  margin-left: auto;
}

.arrow {
  margin-left: 5px;
  border-left: 5px solid #111;
  border-top: 5px solid transparent;
  border-bottom: 5px solid transparent;
}

.pointer {
  position: absolute;
  left: 104px;
  top: 121px;
}

.account {
  display: flex;
  align-items: center;
  padding-right: 26px;
}

.version {
  margin-left: 21px;
  font-size: 18px;
}

.personal,
.user {
  display: flex;
  align-items: center;
  gap: 12px;
}

.personal {
  margin: 0 12px 0 23px;
}

.sync {
  display: flex;
  align-items: center;
  gap: 4px;
  height: 33px;
  padding: 0 16px;
  border-radius: 17px;
  background: #94baff;
}

.flag {
  margin: 0 23px 0 11px;
}

.avatar {
  margin: 0 11px 0 16px;
}

.caret {
  border-top: 6px solid #111;
  border-left: 5px solid transparent;
  border-right: 5px solid transparent;
}

.caret.light {
  border-top: 7px solid #fff;
  border-left-width: 6px;
  border-right-width: 6px;
}

.toolbar {
  display: flex;
  align-items: center;
  height: 43px;
  background: #fff;
  border-bottom: 1px solid #bbb;
}

.tool {
  display: flex;
  align-items: center;
  justify-content: center;
  width: 41px;
  height: 36px;
  flex: none;
  font-size: 18px;
}

.tool.drc {
  font-size: 12px;
  font-weight: 700;
}

.combo {
  display: flex;
  align-items: center;
  gap: 5px;
  width: 51px;
  height: 36px;
  padding-left: 9px;
  box-sizing: border-box;
  flex: none;
}

.sep {
  width: 1px;
  height: 36px;
  margin: 0 6px;
  background: #bbb;
}

.select {
  position: relative;
  width: 110px;
  margin-left: 5px;
}

.select::after {
  content: "";
  position: absolute;
  right: 12px;
  top: 8px;
  width: 5px;
  height: 5px;
  border: solid #333;
  border-width: 0 2px 2px 0;
  transform: rotate(45deg);
}

.select select {
  appearance: none;
  width: 100%;
  height: 29px;
  padding: 0 6px;
  border: 1px solid #c4c4c4;
  border-radius: 2px;
  background: #fff;
  font: inherit;
  color: #222;
  display: block;
}

main {
  display: flex;
  flex: 1;
  min-height: 0;
}

.rail {
  display: flex;
  flex-direction: column;
  width: 38px;
  box-sizing: border-box;
  padding-left: 7px;
  border-left: 1px solid #000;
  border-right: 1px solid #c4c4c4;
  background: #efefef;
}

.rail-pin {
  display: flex;
  align-items: center;
  justify-content: center;
  height: 43px;
  padding-right: 7px;
  box-sizing: border-box;
}

.rail-tab {
  writing-mode: vertical-rl;
  text-orientation: upright;
  padding: 15px 5px;
  min-height: 96px;
  border: 1px solid #c4c4c4;
  border-bottom: none;
  border-right: none;
  text-align: center;
  margin-right: -1px;
}

.rail-tab:last-child {
  border-bottom: 1px solid #c4c4c4;
  min-height: 103px;
}

.rail-tab.on {
  background: #fff;
  color: #1068cc;
  font-weight: 700;
}

.rail.right {
  padding: 0 6px 0 0;
  border-left: 1px solid #d4d4d4;
  border-right: none;
}

.project {
  display: flex;
  flex-direction: column;
  width: 414px;
  background: #fff;
}

.project-tabs {
  display: grid;
  grid-template-columns: repeat(4, 1fr);
  height: 30px;
  padding: 6px 6px 0;
  background: #efefef;
  border-bottom: 1px solid #c4c4c4;
}

.project-tabs button {
  border: 1px solid #c4c4c4;
  border-bottom: none;
  border-left: none;
}

.project-tabs button:first-child {
  border-left: 1px solid #c4c4c4;
}

.project-tabs button.on {
  background: #fff;
  color: #0d74dc;
  font-weight: 700;
  margin-bottom: -1px;
}

.search {
  display: flex;
  align-items: center;
  height: 30px;
  margin: 9px 7px 0 10px;
  padding-right: 7px;
  border: 1px solid #ccc;
}

.search input {
  flex: 1;
  border: none;
  outline: none;
  font: inherit;
}

.subtabs {
  display: flex;
  align-items: center;
  gap: 16px;
  height: 37px;
  padding-left: 19px;
}

.subtabs button + button {
  border-left: 1px solid #ccc;
  padding-left: 16px;
}

.subtabs .on {
  color: #0d74dc;
  font-weight: 700;
}

.tree {
  display: grid;
  grid-auto-rows: 1fr;
  height: 675px;
}

.tree li {
  display: flex;
  align-items: center;
  gap: 6px;
  padding: 0 20px 0 11px;
  white-space: nowrap;
}

.tree li.level-2 {
  padding-left: 32px;
}

.tree li.level-3 {
  padding-left: 54px;
}

.joint {
  margin-right: -3px;
}

.net-color {
  width: 19px;
  height: 19px;
  background: #000;
}

.tree .gold {
  color: #d9a03c;
}

.reload {
  color: #777;
  padding-left: 4px;
}

.sort {
  margin-left: 3px;
}

.add {
  display: flex;
  margin-left: auto;
}

.splitter {
  position: relative;
  width: 6px;
  background: #e4e4e4 radial-gradient(#999 1px, transparent 1px) 0 0 / 6px 6px;
}

.splitter.right {
  width: 9px;
}

.splitter .handle {
  position: absolute;
  top: 50%;
  left: 0;
  right: 0;
  height: 66px;
  transform: translateY(-50%);
  border: 1px solid #444;
  background: #ddd;
}

.editor {
  display: flex;
  flex-direction: column;
  flex: 1;
  min-width: 0;
}

.doc-tabs {
  display: flex;
  height: 39px;
  background: #dcdcdc;
  border-bottom: 1px solid #bbb;
}

.doc {
  display: flex;
  align-items: center;
  gap: 8px;
  padding: 0 12px;
  background: #ececec;
  border-right: 1px solid #c4c4c4;
}

.doc :global(svg) {
  color: #4a6fe0;
}

.doc.on {
  background: #fff;
  color: #1677d8;
}

.sheet {
  display: grid;
  grid-template: 24px 1fr / 24px 1fr;
  flex: 1;
  min-height: 0;
  background: #fff;
}

.ruler {
  display: block;
  overflow: hidden;
  stroke: #222;
  background: #fff;
}

.ruler text {
  font: 15px "DejaVu Sans Mono", monospace;
  fill: #444;
  stroke: none;
}

.board {
  display: block;
  background: #000;
}

.trace path {
  fill: none;
  stroke: #ff1400;
  stroke-width: 20px;
}

.smd path {
  fill: #ff1400;
  stroke: #3a0049;
  stroke-width: 4px;
  paint-order: stroke;
}

.silk path {
  fill: none;
  stroke: #ffc800;
  stroke-width: 14px;
  stroke-linecap: round;
}

.net {
  font-family: "DejaVu Sans Mono", monospace;
  text-anchor: middle;
  dominant-baseline: central;
  fill: #ffb8a4;
}

.net.small {
  font-size: 16px;
}

.net.part {
  font-size: 15px;
}

.net .big {
  font-size: 22px;
}

.net.white {
  fill: #d4d4d4;
}

.layers {
  position: relative;
  display: flex;
  flex-direction: column;
  width: 344px;
  background: #fff;
}

.layer-head {
  display: flex;
  align-items: center;
  gap: 7px;
  padding: 11px 9px 0;
}

.select.wide {
  width: 179px;
}

.reset {
  width: 61px;
  height: 29px;
  border: 1px solid #c4c4c4;
  color: #0d6cc8;
  font-weight: 700;
}

.layer-tabs {
  display: flex;
  align-items: center;
  height: 35px;
  padding-left: 7px;
}

.layer-tabs button {
  padding: 0 16px;
}

.layer-tabs button + button {
  border-left: 1px solid #ddd;
}

.layer-tabs .on {
  color: #0d74dc;
  font-weight: 700;
}

.layer-list li {
  display: flex;
  align-items: center;
  gap: 11px;
  height: 32px;
  padding-right: 21px;
}

.layer-list li.group-row {
  padding-left: 7px;
}

.group-row .eye {
  margin-left: 4px;
}

.layer-list li.selected {
  background: #f9ebdb;
}

.swatch {
  display: flex;
  align-items: center;
  justify-content: center;
  width: 47px;
  height: 32px;
}

.eye,
.lock {
  display: flex;
}

.lock {
  margin-left: auto;
  padding-top: 3px;
}

.status {
  width: calc(100% + 38px);
  border-collapse: collapse;
  background: #efefef;
  position: relative;
  z-index: 1;
}

.status tr {
  height: 32px;
  border-top: 1px solid #d0d0d0;
}

.status th {
  width: 36px;
  padding: 0 14px 0 0;
  font-weight: 400;
  text-align: right;
}

.status td {
  width: 120px;
  padding: 0;
}

.tv {
  position: absolute;
  right: 18px;
  bottom: 112px;
  filter: drop-shadow(0 0 4px #0006);
}

.h-splitter {
  display: flex;
  justify-content: center;
  align-items: center;
  height: 9px;
  background: #d4d4d4 radial-gradient(#aaa 1px, transparent 1px) 0 0 / 6px 5px;
}

.h-splitter span {
  width: 68px;
  height: 5px;
  border: 1px solid #666;
  background: #eee;
}

footer {
  display: flex;
  height: 41px;
  padding-top: 1px;
  background: #efefef;
}

.foot-pin {
  display: flex;
  align-items: center;
  justify-content: center;
  width: 45px;
  height: 34px;
  padding-left: 6px;
  box-sizing: border-box;
}

footer button {
  min-width: 95px;
  height: 34px;
  padding: 0 24px;
  border: 1px solid #c4c4c4;
  border-right: none;
}

footer button:last-child {
  border-right: 1px solid #c4c4c4;
}

footer button.on {
  background: #fff;
  color: #1677d8;
}

.taskbar {
  height: 3px;
  padding-left: 65px;
  background: #333;
}

.taskbar span {
  display: block;
  width: 384px;
  height: 3px;
  background: #c8c8c8;
}

.watermark {
  position: absolute;
  z-index: 6;
  left: 72px;
  top: 66px;
  display: flex;
  align-items: baseline;
  gap: 28px;
  font-size: 48px;
  line-height: 60px;
  color: #fffc;
  text-shadow: 0 0 2px #0003;
  pointer-events: none;
}

.watermark b {
  font-family: "Lato", sans-serif;
  font-size: 70px;
}

.danmaku {
  position: absolute;
  top: 4px;
  z-index: 6;
  font-size: 37px;
  line-height: 44px;
  white-space: nowrap;
  color: #fff;
  -webkit-text-stroke: 3px #333;
  paint-order: stroke;
}

.danmaku.a {
  left: -18px;
}

.danmaku.b {
  left: 611px;
}

.danmaku.c {
  left: 823px;
}

.danmaku.d {
  left: 2249px;
}

.subtitle {
  position: absolute;
  z-index: 6;
  left: 50%;
  bottom: 154px;
  transform: translateX(-50%);
  padding: 0 5px 8px;
  background: #fff;
  color: #000;
  font: 500 74px/70px "Noto Sans CJK SC", sans-serif;
  white-space: nowrap;
}
</style>
